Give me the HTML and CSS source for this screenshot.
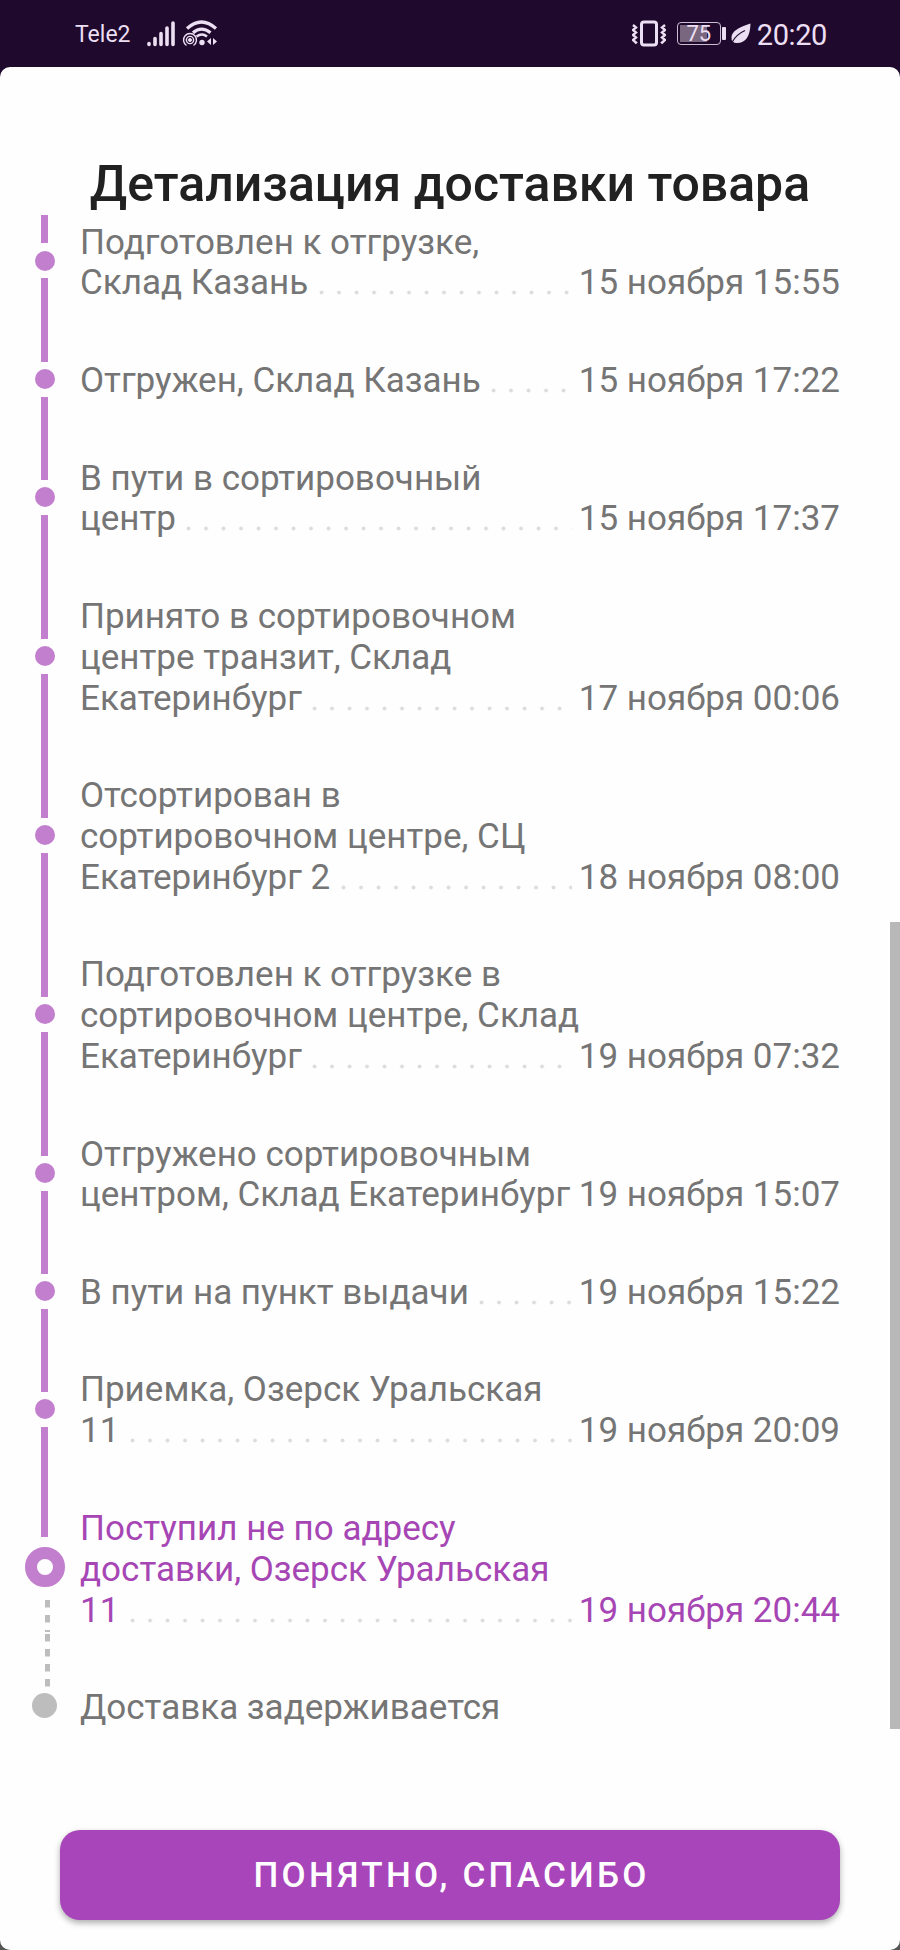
FILE: index.html
```html
<!DOCTYPE html>
<html lang="ru">
<head>
<meta charset="utf-8">
<title>Детализация доставки товара</title>
<link rel="stylesheet" href="styles.css">
</head>
<body>
<div class="screen">
  <header class="status">
    <span class="carrier">Tele2</span>
    <svg class="signal" width="28" height="26" viewBox="0 0 28 26" fill="none" stroke="#eddff3" stroke-width="3.6" stroke-linecap="round"><path d="M2 22.6v.8M8 17.5v6M14 12.5v11M20 7v16.5M26 2v21.500"/></svg>
    <svg class="wifi" width="36" height="27" viewBox="0 0 36 27" fill="none" stroke="#eddff3">
      <path d="M5 8.500Q19.500-4.500 34 8.500M11 12.800Q19.500 5.500 28.500 12.800" stroke-width="3.200"/>
      <path d="M14.500 16.500Q20 12.500 25 16.500" stroke-width="2.600"/>
      <g stroke-width="1.400"><path d="M4.500 25.500A6.500 6.500 0 1 1 11.500 25.500"/><circle cx="8" cy="20" r="3.600"/></g>
      <circle cx="8" cy="20" r="1.500" fill="#eddff3"/><circle cx="20" cy="22.500" r="2.700" fill="#eddff3" stroke="none"/>
      <path d="M29 18v7l-4-3.500zM31 18v7l4-3.500z" fill="#eddff3" stroke="none"/>
    </svg>
    <span class="spacer"></span>
    <svg class="vibro" width="34" height="28" viewBox="0 0 34 28" fill="none" stroke="#eddff3"><rect x="9.500" y="2" width="15" height="23" rx="2.500" stroke-width="3"/><path d="M1 5l3 2.500-3 2.500 3 2.500-3 2.500 3 2.500-3 2.500 3 2.500-1 1M33 5l-3 2.500 3 2.500-3 2.500 3 2.500-3 2.500 3 2.500-3 2.500 1 1" stroke-width="2.400"/></svg>
    <span class="battery"><span class="level">75</span></span><i class="cap"></i>
    <svg class="leaf" width="20" height="21" viewBox="0 0 20 21"><path d="M19.500.5Q19 20 6 20Q0 20 .5 14Q1 6 19.500.5Z" fill="#eddff3"/><path d="M1 19.500Q5 11.500 14 7.500" fill="none" stroke="#1f092c" stroke-width="1.200"/></svg>
    <span class="clock">20:20</span>
  </header>

  <main class="sheet">
    <h1 class="title">Детализация доставки товара</h1>
    <div class="body">
      <ol class="timeline">
        <li class="step first"><div class="rail"><i class="bar"></i><i class="dot"></i><i class="bar"></i></div>
          <div class="text"><div>Подготовлен к отгрузке,</div><div class="last"><span>Склад Казань</span><i class="leader"></i><time>15 ноября 15:55</time></div></div></li>
        <li class="step"><div class="rail"><i class="bar"></i><i class="dot"></i><i class="bar"></i></div>
          <div class="text"><div class="last"><span>Отгружен, Склад Казань</span><i class="leader"></i><time>15 ноября 17:22</time></div></div></li>
        <li class="step"><div class="rail"><i class="bar"></i><i class="dot"></i><i class="bar"></i></div>
          <div class="text"><div>В пути в сортировочный</div><div class="last"><span>центр</span><i class="leader"></i><time>15 ноября 17:37</time></div></div></li>
        <li class="step"><div class="rail"><i class="bar"></i><i class="dot"></i><i class="bar"></i></div>
          <div class="text"><div>Принято в сортировочном</div><div>центре транзит, Склад</div><div class="last"><span>Екатеринбург</span><i class="leader"></i><time>17 ноября 00:06</time></div></div></li>
        <li class="step"><div class="rail"><i class="bar"></i><i class="dot"></i><i class="bar"></i></div>
          <div class="text"><div>Отсортирован в</div><div>сортировочном центре, СЦ</div><div class="last"><span>Екатеринбург 2</span><i class="leader"></i><time>18 ноября 08:00</time></div></div></li>
        <li class="step"><div class="rail"><i class="bar"></i><i class="dot"></i><i class="bar"></i></div>
          <div class="text"><div>Подготовлен к отгрузке в</div><div>сортировочном центре, Склад</div><div class="last"><span>Екатеринбург</span><i class="leader"></i><time>19 ноября 07:32</time></div></div></li>
        <li class="step"><div class="rail"><i class="bar"></i><i class="dot"></i><i class="bar"></i></div>
          <div class="text"><div>Отгружено сортировочным</div><div class="last"><span>центром, Склад Екатеринбург</span><time>19 ноября 15:07</time></div></div></li>
        <li class="step"><div class="rail"><i class="bar"></i><i class="dot"></i><i class="bar"></i></div>
          <div class="text"><div class="last"><span>В пути на пункт выдачи</span><i class="leader"></i><time>19 ноября 15:22</time></div></div></li>
        <li class="step"><div class="rail"><i class="bar"></i><i class="dot"></i><i class="bar"></i></div>
          <div class="text"><div>Приемка, Озерск Уральская</div><div class="last"><span>11</span><i class="leader"></i><time>19 ноября 20:09</time></div></div></li>
        <li class="step current"><div class="rail"><i class="bar"></i><i class="ring"></i>
            <svg class="dashes" width="5" height="58" viewBox="0 0 5 58" fill="#bdbdbd"><path d="M0 0h5v7.500H0zM0 15h5v7.500H0zM0 30h5v2H0zM0 34h5v7.500H0zM0 49h5v7.500H0z"/></svg></div>
          <div class="text"><div>Поступил не по адресу</div><div>доставки, Озерск Уральская</div><div class="last"><span>11</span><i class="leader"></i><time>19 ноября 20:44</time></div></div></li>
        <li class="step pending"><div class="rail">
            <svg class="dashes" width="5" height="29" viewBox="0 0 5 29" fill="#bdbdbd"><path d="M0 6h5v7.500H0zM0 21h5v7.500H0z"/></svg><i class="dot"></i></div>
          <div class="text"><div>Доставка задерживается</div></div></li>
      </ol>
      <div class="scroll"><i class="thumb"></i></div>
    </div>
    <button class="ok" type="button">ПОНЯТНО, СПАСИБО</button>
  </main>
</div>
</body>
</html>
```
FILE: styles.css
```css
* { box-sizing: border-box; }
body { margin: 0; font-family: Roboto, sans-serif; background: #555; }
.screen {
  width: 900px; height: 1950px; overflow: hidden;
  display: flex; flex-direction: column;
  background: linear-gradient(#1f092c 100px, #555 100px);
}
.status {
  height: 67px; flex: none; display: flex; align-items: center;
  padding: 0 73px 0 75px; color: #eddff3;
}
.carrier { font-size: 23px; line-height: 30px; width: 72px; padding-top: 2px; }
.signal { margin-right: 7px; }
.spacer { flex: 1; }
.vibro { margin-right: 11px; }
.battery {
  width: 44px; height: 23px; border: 1.500px solid #cbbdd2; border-radius: 4px;
  padding: 2px; flex: none;
}
.level {
  display: block; width: 100%; height: 100%;
  background: linear-gradient(90deg, #79677f 72%, transparent 72%);
  font-size: 22px; line-height: 18px; text-align: center; font-weight: 400;
}
.cap { width: 4px; height: 13px; margin-left: 1px; background: #eddff3; border-radius: 1px; }
.leaf { margin: 0 6px 0 5px; }
.clock { font-size: 29px; line-height: 34px; letter-spacing: -.4px; padding-top: 2px; }

.sheet {
  flex: 1; display: flex; flex-direction: column; min-height: 0;
  background: #fefefe; border-radius: 10px;
}
.title {
  margin: 0; height: 148px; padding-top: 88px; flex: none;
  text-align: center; font-size: 50px; line-height: 58px; font-weight: 500; color: #212121;
  white-space: nowrap;
}
.body { display: flex; height: 1514px; flex: none; }
.timeline { list-style: none; margin: 0; padding: 0 0 0 25px; width: 890px; }
.step {
  display: flex; font-size: 35px; line-height: 40.850px; color: #757575; white-space: nowrap;
}
.rail { width: 40px; margin: -1.500px 15px 1.500px 0; display: flex; flex-direction: column; align-items: center; }
.first .rail { margin-top: 0; }
.text { width: 760px; padding: 29.500px 0 27.200px; }
.step.first .text { padding-top: 7.650px; }
.bar { flex: 1 1 0; width: 7px; margin-right: 1px; background: #c27fce; }
.dot { width: 20px; height: 20px; border-radius: 50%; background: #c27fce; margin: 7.500px 0; flex: none; }
.step .bar:last-child { margin-bottom: -1px; }
.step.first .bar:first-child { flex: none; height: 28px; }
.current .rail, .pending .rail { margin-top: -1px; margin-bottom: 1px; }
.ring { width: 40px; height: 40px; border-radius: 50%; border: 12px solid #c27fce; margin: 10px 0 12.500px; flex: none; }
.dashes { margin-left: 5px; flex: none; display: block; }
.current .text { color: #a646b4; }
.pending .dot { width: 25px; height: 25px; background: #bdbdbd; margin: 6px 0 0 -1px; }
.last { display: flex; }
.last time { margin-left: auto; }
.leader {
  flex: 1; margin-left: 10.500px; margin-right: 7px;
  background: radial-gradient(circle at 2.500px 29.500px, #dcdcdc 1.600px, transparent 2.300px) repeat-x;
  background-size: 17.500px 100%;
}
.scroll { width: 10px; display: flex; align-items: flex-end; }
.thumb { width: 10px; height: 807px; background: #b8b8b8; }
.ok {
  margin: 101px 60px 0; height: 90px; flex: none; border: 0; border-radius: 20px;
  background: #a945ba; color: #fff; padding: 2px 0 0 3px;
  font: 500 35px/40px Roboto, sans-serif; letter-spacing: 3.250px;
  box-shadow: 0 3px 6px rgba(0,0,0,.32);
}
```
